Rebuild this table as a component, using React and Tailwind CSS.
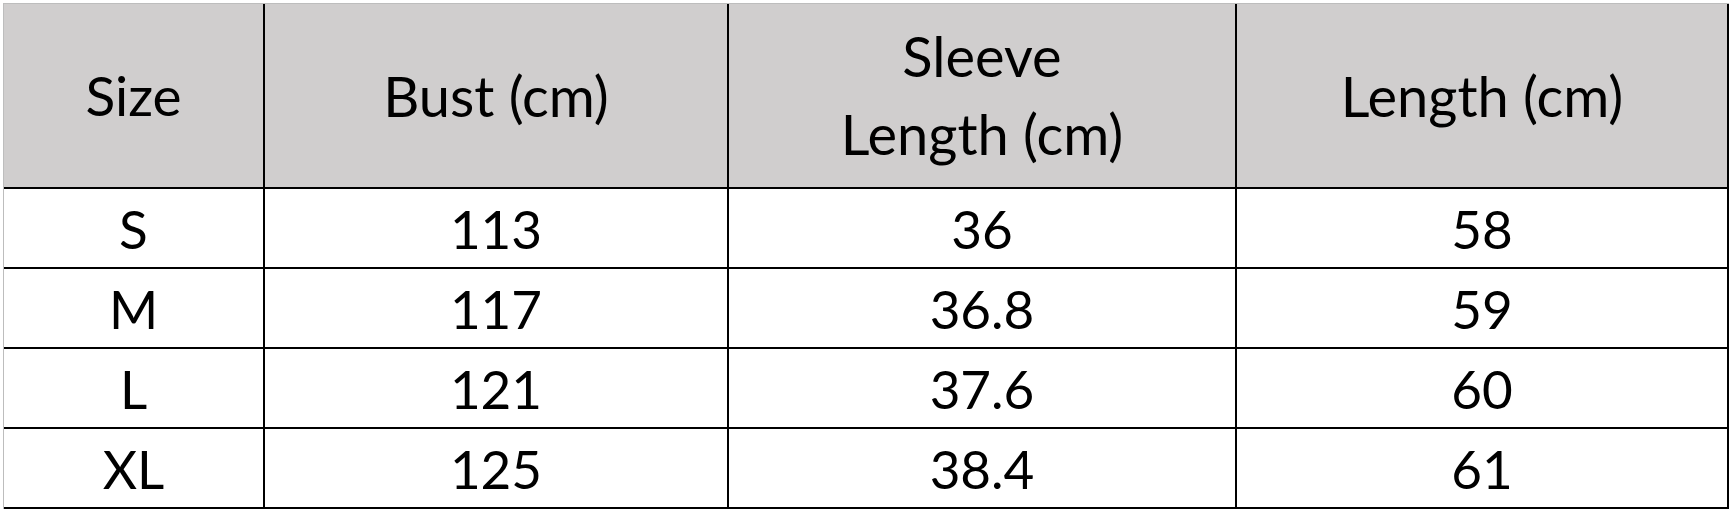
export default function App() {
  const rows = [
    ["S", "113", "36", "58"],
    ["M", "117", "36.8", "59"],
    ["L", "121", "37.6", "60"],
    ["XL", "125", "38.4", "61"],
  ];
  const font = { fontFamily: "Lato, 'Open Sans', sans-serif" };
  return (
    <div className="w-[1731px] h-[511px] bg-white overflow-hidden pt-[3px] pl-[3px]" style={font}>
      <div className="grid grid-cols-[261px_464px_508px_492px] grid-rows-[185px_80px_80px_80px_80px] border-l border-t border-[#bdbdbd] w-[1726px] text-black text-[53px] leading-none">
        <div className="flex items-center justify-center bg-[#d0cece] border-r-2 border-b-2 border-black text-[55px]">Size</div>
        <div className="flex items-center justify-center bg-[#d0cece] border-r-2 border-b-2 border-black text-[56px]">Bust (cm)</div>
        <div className="flex flex-col items-center justify-center bg-[#d0cece] border-r-2 border-b-2 border-black text-[56px] leading-[78px] pb-[2px]">
          <span>Sleeve</span>
          <span>Length (cm)</span>
        </div>
        <div className="flex items-center justify-center bg-[#d0cece] border-r-2 border-b-2 border-black text-[56px]">Length (cm)</div>
        {rows.map((r, i) =>
          r.map((c, j) => (
            <div key={i + "-" + j} className="flex items-center justify-center border-r-2 border-b-2 border-black">
              {c}
            </div>
          ))
        )}
      </div>
    </div>
  );
}
